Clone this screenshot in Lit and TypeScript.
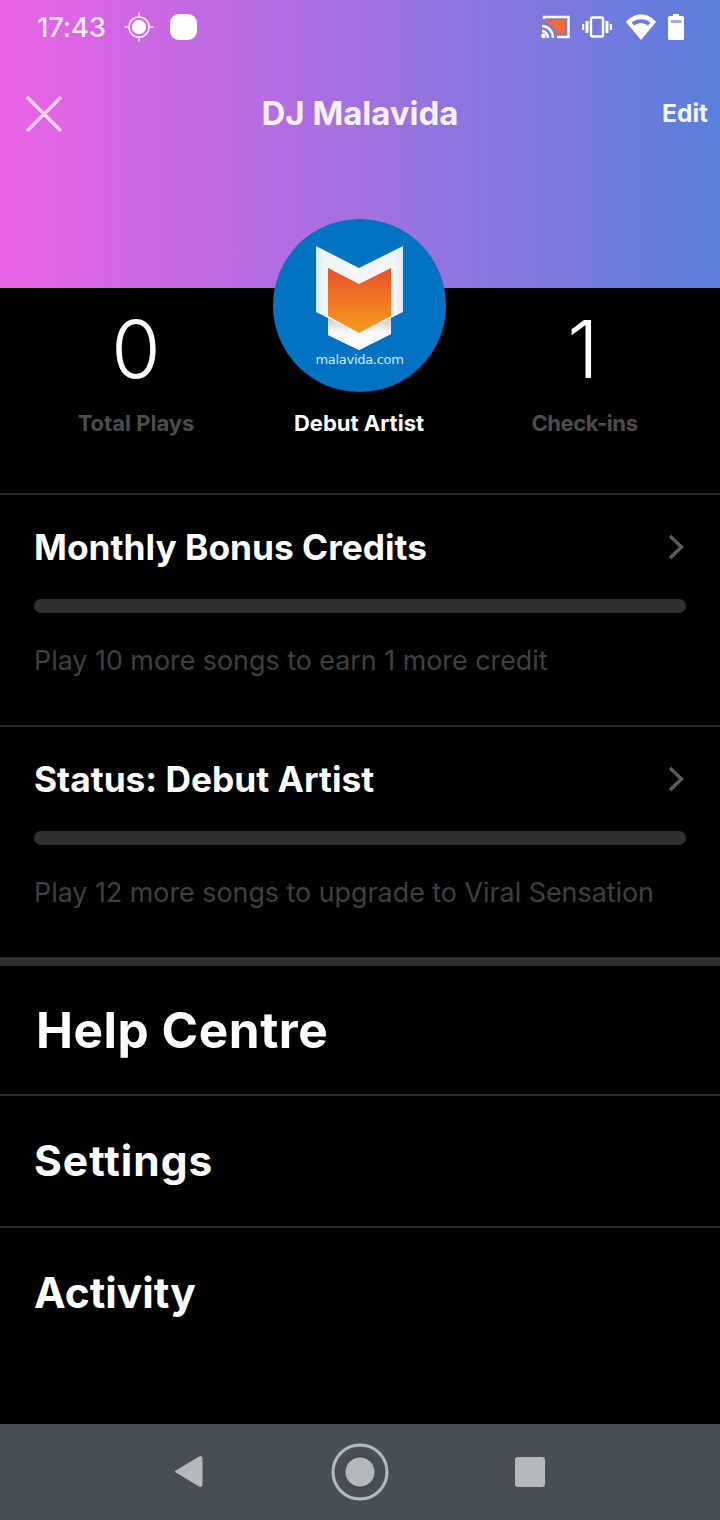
import {LitElement, html, css, svg} from 'lit';
import {customElement} from 'lit/decorators.js';

const logo = svg`
  <defs>
    <linearGradient id="sh" x1="0" y1="0" x2="0" y2="1">
      <stop offset="0" stop-color="#ea4f2a"/>
      <stop offset="1" stop-color="#f79c1e"/>
    </linearGradient>
    <linearGradient id="pn" x1="0" y1="0" x2="1" y2="0">
      <stop offset="0" stop-color="#cfeefa"/>
      <stop offset="0.1" stop-color="#f4f6f8"/>
      <stop offset="0.9" stop-color="#f4f6f8"/>
      <stop offset="1" stop-color="#dcecf5"/>
    </linearGradient>
    <linearGradient id="lo" x1="0" y1="0" x2="0" y2="1">
      <stop offset="0" stop-color="#c9c9c9"/>
      <stop offset="0.4" stop-color="#f4f5f6"/>
      <stop offset="1" stop-color="#ffffff"/>
    </linearGradient>
  </defs>
  <path d="M43 27 L86 49 L130 27 V93 L118 99 V115 L86 131 L55 116 V99 L43 93 Z" fill="url(#pn)"/>
  <path d="M55 99 L86 114 L118 99 V115 L86 131 L55 116 Z" fill="url(#lo)"/>
  <path d="M55 49 L86 65 L118 49 V97 L86 114 L55 97 Z" fill="url(#sh)"/>
`;

@customElement('app-root')
export class AppRoot extends LitElement {
  static styles = css`
    :host {
      display: block;
      width: 720px;
      height: 1520px;
      background: #000;
      color: #fff;
      font-family: Inter, "Liberation Sans", sans-serif;
    }
    .page {
      height: 1520px;
      display: flex;
      flex-direction: column;
      position: relative;
    }
    .hero {
      height: 288px;
      box-sizing: border-box;
      background: linear-gradient(90deg, #ea62e4 0%, #5a7fdc 100%);
      display: flex;
      flex-direction: column;
    }
    .status {
      height: 54px;
      padding: 0 36px 0 37px;
      display: flex;
      align-items: center;
      color: #fbe9f9;
    }
    .time {
      font-size: 27.5px;
      font-weight: 500;
      letter-spacing: -0.2px;
      margin-right: 18px;
    }
    .status svg {
      display: block;
    }
    .dot {
      width: 27px;
      height: 26px;
      border-radius: 9px;
      background: #fff;
      margin-left: 16px;
    }
    .spacer {
      flex: 1;
    }
    .sys {
      display: flex;
      align-items: center;
      gap: 12px;
    }
    .sys .wifi {
      margin-left: 2px;
    }
    .bar {
      display: grid;
      grid-template-columns: 1fr auto 1fr;
      align-items: center;
      padding: 0 12px 0 26px;
      margin-top: 39px;
    }
    .bar h1 {
      margin: 0 14px 2px 0;
      font-size: 33px;
      font-weight: 700;
      color: #f8f1fb;
    }
    .edit {
      justify-self: end;
      font-size: 24.5px;
      font-weight: 700;
      color: #f2f5fc;
      margin-bottom: 2px;
    }
    .avatar {
      position: absolute;
      left: 273px;
      top: 219px;
      width: 173px;
      height: 173px;
    }
    .avatar span {
      position: absolute;
      left: 0;
      right: 0;
      top: 133px;
      text-align: center;
      font: 13px "DejaVu Sans", sans-serif;
      color: #d6edf8;
      letter-spacing: -0.3px;
    }
    .stats {
      height: 205px;
      display: grid;
      grid-template-columns: 272px 174px 1fr;
      text-align: center;
    }
    .stat {
      display: flex;
      flex-direction: column;
      align-items: center;
    }
    .num {
      font-size: 80px;
      font-weight: 300;
      line-height: 92px;
      margin-top: 15px;
    }
    .label {
      font-size: 22px;
      font-weight: 700;
      color: #4c4c4c;
      line-height: 28px;
      margin-top: 14px;
    }
    .checkins {
      letter-spacing: -0.4px;
      padding-left: 3px;
    }
    .mid {
      justify-content: flex-end;
      padding-bottom: 56px;
    }
    .mid .label {
      color: #fff;
    }
    .card {
      height: 232px;
      box-sizing: border-box;
      border-top: 2px solid #2b2b2b;
      padding: 31px 34px 0;
    }
    .card-head {
      display: flex;
      align-items: center;
      justify-content: space-between;
    }
    .card h2 {
      margin: 0;
      font-size: 35.3px;
      line-height: 44px;
      font-weight: 700;
    }
    .card-head svg {
      margin-bottom: 2px;
    }
    .track {
      height: 14px;
      border-radius: 7px;
      background: #2f2f2f;
      margin-top: 29px;
    }
    .hint {
      margin-top: 30px;
      font-size: 26.85px;
      line-height: 34px;
      font-weight: 400;
      color: #404040;
    }
    .thick {
      height: 9px;
      background: #2d2d2d;
    }
    .help {
      height: 128px;
      display: flex;
      align-items: center;
      padding: 0 36px;
      font-size: 49.5px;
      font-weight: 700;
      letter-spacing: 0.55px;
      box-sizing: border-box;
    }
    .row {
      height: 132px;
      box-sizing: border-box;
      border-top: 2px solid #2b2b2b;
      display: flex;
      align-items: center;
      padding: 0 34px 2px;
      font-size: 42.5px;
      font-weight: 700;
    }
    .settings {
      letter-spacing: 1px;
    }
    .nav {
      margin-top: auto;
      height: 96px;
      background: #474f54;
    }
    .nav svg {
      display: block;
    }
  `;

  card(title: string, hint: string) {
    return html`<section class="card">
      <div class="card-head">
        <h2>${title}</h2>
        <svg width="18" height="26" viewBox="0 0 18 26">
          <path d="M2 2 L13.5 13 L2 24" fill="none" stroke="#5c5c5c" stroke-width="3.4"/>
        </svg>
      </div>
      <div class="track"></div>
      <div class="hint">${hint}</div>
    </section>`;
  }

  render() {
    return html`<div class="page">
      <header class="hero">
        <div class="status">
          <span class="time">17:43</span>
          <svg width="30" height="30" viewBox="0 0 30 30" fill="none" stroke="#fbe9f9">
            <circle cx="15" cy="15" r="10" stroke-width="1.6"/>
            <circle cx="15" cy="15" r="7.2" fill="#fff" stroke="none"/>
            <path d="M15 0.5V5M15 25V29.5M0.5 15H5M25 15H29.5" stroke-width="1.5"/>
          </svg>
          <span class="dot"></span>
          <span class="spacer"></span>
          <div class="sys">
            <svg width="30" height="24" viewBox="0 0 30 24">
              <path d="M4 4V2H28.5V22H17" fill="none" stroke="#fff" stroke-width="2.4"/>
              <path d="M5 5H25V19H16C15 12 11 8 5 7Z" fill="#f4693a"/>
              <path d="M2 11C8 11 13 16 13 23M2 16C5 16 8 19 8 23" fill="none" stroke="#fff" stroke-width="2.4"/>
              <circle cx="3.5" cy="21" r="2.4" fill="#fff"/>
            </svg>
            <svg width="30" height="24" viewBox="0 0 30 24" fill="none" stroke="#fff" stroke-width="2.4">
              <rect x="9" y="2.5" width="12" height="19" rx="1.5"/>
              <path d="M5 6V18M25 6V18" stroke-width="3"/>
              <path d="M1 9V15M29 9V15" stroke-width="2.4"/>
            </svg>
            <svg class="wifi" width="30" height="26" viewBox="0 0 30 26">
              <path d="M0 8C8 -2 22 -2 30 8L15 26Z" fill="#fff"/>
              <path d="M5.5 8.5C11 4 19 4 24.5 8.5L22 11.5C17 8 13 8 8 11.5Z" fill="#6c7ade"/>
            </svg>
            <svg width="16" height="26" viewBox="0 0 16 26">
              <path d="M5 0H11V2H14.5Q16 2 16 3.5V24.5Q16 26 14.5 26H1.5Q0 26 0 24.5V3.5Q0 2 1.5 2H5Z" fill="#fff"/>
              <rect x="3" y="6" width="10" height="3" fill="#9aa6e6"/>
            </svg>
          </div>
        </div>
        <div class="bar">
          <svg width="36" height="36" viewBox="0 0 36 36" stroke="#fbd4f3" stroke-width="3.4">
            <path d="M1 1L35 35M35 1L1 35"/>
          </svg>
          <h1>DJ Malavida</h1>
          <span class="edit">Edit</span>
        </div>
      </header>

      <div class="avatar">
        <svg width="173" height="173" viewBox="0 0 173 173">
          <circle cx="86.5" cy="86.5" r="86.5" fill="#0272c2"/>
          ${logo}
        </svg>
        <span>malavida.com</span>
      </div>

      <div class="stats">
        <div class="stat">
          <div class="num">0</div>
          <div class="label">Total Plays</div>
        </div>
        <div class="stat mid">
          <div class="label">Debut Artist</div>
        </div>
        <div class="stat">
          <div class="num">1</div>
          <div class="label checkins">Check-ins</div>
        </div>
      </div>

      ${this.card('Monthly Bonus Credits', 'Play 10 more songs to earn 1 more credit')}
      ${this.card('Status: Debut Artist', 'Play 12 more songs to upgrade to Viral Sensation')}
      <div class="thick"></div>
      <div class="help">Help Centre</div>
      <div class="row settings">Settings</div>
      <div class="row">Activity</div>

      <nav class="nav">
        <svg width="720" height="96" viewBox="0 0 720 96">
          <path d="M175 47.5 L199 33 Q202 31.5 202 34 V61 Q202 63.5 199 62 Z" fill="#b5b9bb" stroke="#b5b9bb" stroke-linejoin="round"/>
          <circle cx="360" cy="48" r="27" fill="none" stroke="#b5b9bb" stroke-width="3"/>
          <circle cx="360" cy="48" r="14.5" fill="#b5b9bb"/>
          <rect x="515" y="33" width="30" height="30" rx="3" fill="#b5b9bb"/>
        </svg>
      </nav>
    </div>`;
  }
}
